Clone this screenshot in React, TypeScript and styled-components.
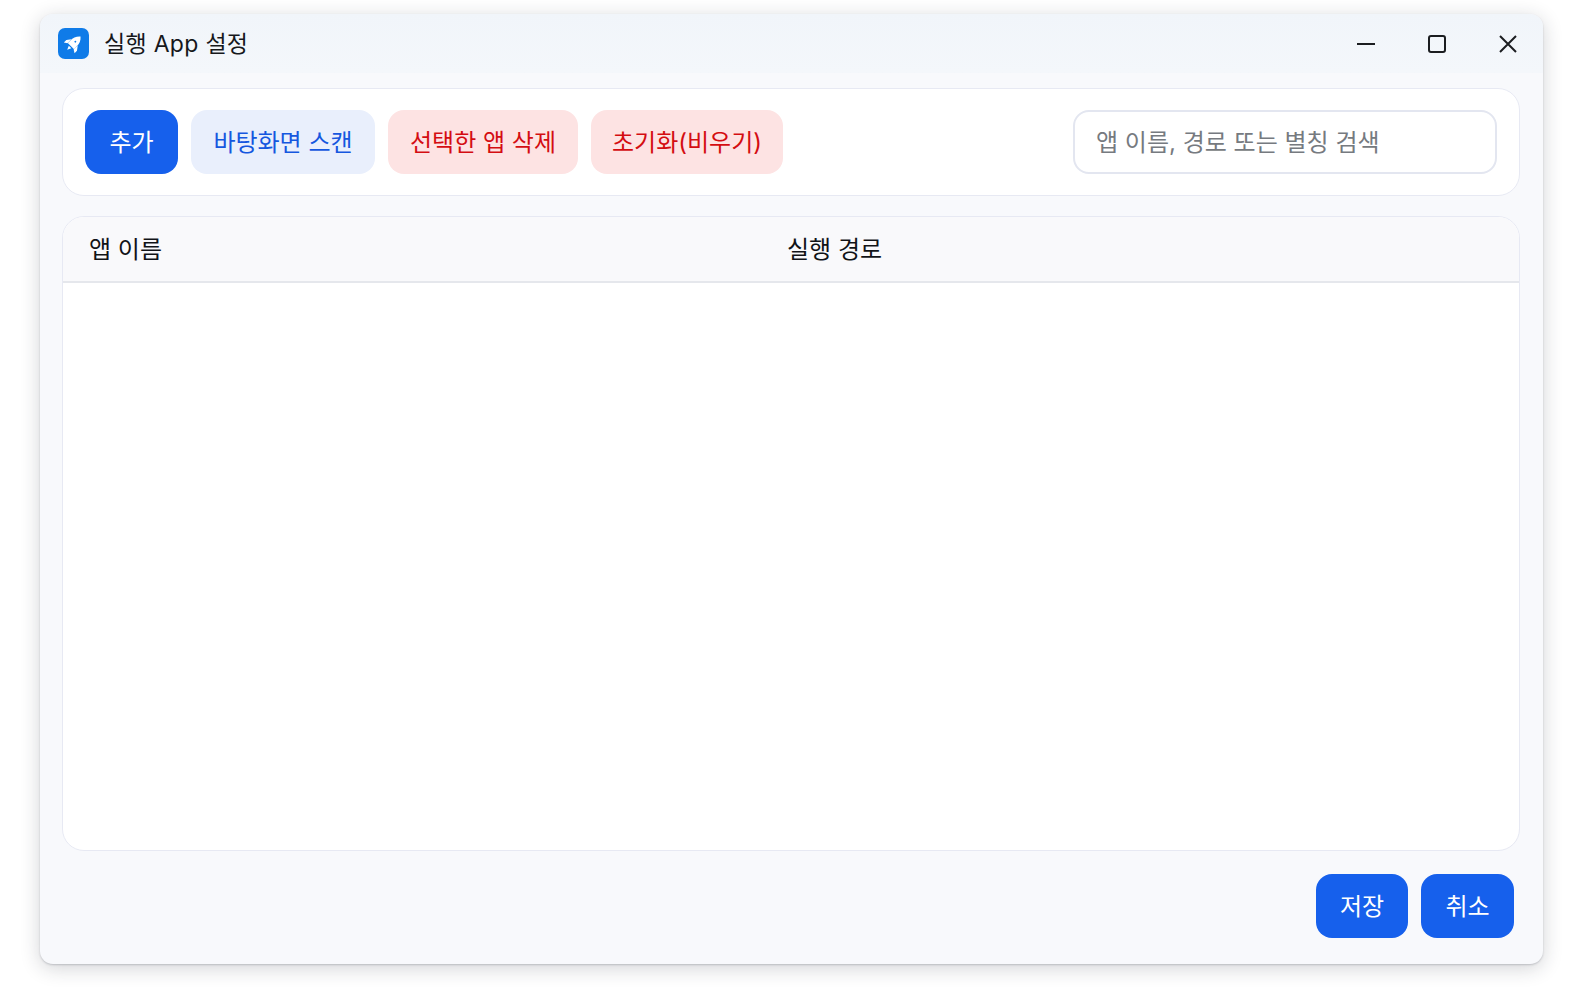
import React from "react";
import styled, { createGlobalStyle } from "styled-components";

const Global = createGlobalStyle`
  html, body { margin: 0; padding: 0; background: #ffffff; height: 100%; overflow: hidden; }
  body { font-family: "Inter", "Noto Sans CJK KR", sans-serif; }
  * { box-sizing: border-box; }
`;

const Page = styled.div`
  width: 1586px;
  height: 992px;
  padding: 14px 43px 28px 40px;
  background: #fff;
`;

const Win = styled.div`
  height: 100%;
  display: flex;
  flex-direction: column;
  border-radius: 13px;
  background: #f8f9fc;
  box-shadow: 0 4px 20px rgba(30, 35, 50, 0.2), 0 1px 2px rgba(30, 35, 50, 0.2);
  overflow: hidden;
`;

const TitleBar = styled.header`
  height: 59px;
  flex: none;
  display: flex;
  align-items: center;
  padding-left: 18px;
  background: linear-gradient(#f1f5fa, #f4f7fb);
`;

const AppIcon = styled.span`
  width: 31px;
  height: 31px;
  flex: none;
  display: flex;
  align-items: center;
  justify-content: center;
  border-radius: 7px;
  background: #0f7be8;
`;

const Title = styled.h1`
  margin: 0 0 0 15px;
  font-size: 23px;
  font-weight: 400;
  line-height: 30px;
  letter-spacing: 0.3px;
  color: #16181c;
`;

const WinControls = styled.div`
  margin-left: auto;
  display: flex;
`;

const WinBtn = styled.button`
  width: 71px;
  height: 59px;
  padding: 0;
  border: 0;
  background: transparent;
  display: flex;
  align-items: center;
  justify-content: center;
`;

const Body = styled.main`
  flex: 1;
  min-height: 0;
  display: flex;
  flex-direction: column;
  padding: 15px 23px 26px 22px;
`;

const Toolbar = styled.section`
  height: 108px;
  flex: none;
  display: flex;
  align-items: center;
  gap: 13px;
  padding: 0 22px;
  background: #fff;
  border: 1.5px solid #e7e9f3;
  border-radius: 22px;
`;

const variants = {
  primary: { bg: "#1660ec", fg: "#ffffff" },
  soft: { bg: "#e9effc", fg: "#1557df" },
  danger: { bg: "#fde3e3", fg: "#d40d12" },
};

const ActionButton = styled.button<{ $variant: keyof typeof variants; $w: number }>`
  width: ${(p) => p.$w}px;
  height: 64px;
  flex: none;
  padding: 0 0 4px;
  border: 0;
  border-radius: 16px;
  font-family: inherit;
  font-size: 24px;
  font-weight: 400;
  white-space: nowrap;
  background: ${(p) => variants[p.$variant].bg};
  color: ${(p) => variants[p.$variant].fg};
`;

const Search = styled.input`
  width: 424px;
  height: 64px;
  margin-left: auto;
  padding: 0 21px;
  background: #fff;
  border: 2px solid #e3e6f0;
  border-radius: 16px;
  font-family: inherit;
  font-size: 24px;
  outline: none;
  &::placeholder { color: #767a80; opacity: 1; }
`;

const TableCard = styled.section`
  flex: 1;
  min-height: 0;
  margin-top: 20px;
  background: #fff;
  border: 1.5px solid #e7e9f3;
  border-radius: 22px;
  overflow: hidden;
`;

const TableHead = styled.div`
  height: 66px;
  display: grid;
  grid-template-columns: 698px 1fr;
  align-items: center;
  padding: 0 0 3px 26px;
  background: #f9f9fb;
  border-bottom: 2px solid #e5e7ec;
`;

const HeadCell = styled.div`
  font-size: 24px;
  font-weight: 400;
  color: #111317;
`;

const Footer = styled.footer`
  flex: none;
  margin-top: 23px;
  padding-right: 6px;
  display: flex;
  justify-content: flex-end;
  gap: 13px;
`;

export default function App() {
  return (
    <>
      <Global />
      <Page>
        <Win>
          <TitleBar>
            <AppIcon>
              <svg width="21" height="21" viewBox="0 0 20 20">
                <g transform="rotate(45 10 10)">
                  <path fill="#fff" d="M10 .5C13 3 14.200 6.500 14.200 10v3.500H5.800V10C5.800 6.500 7 3 10 .5z" />
                  <path fill="#fff" d="M5.800 8.500 2.800 12.500v3.300l3-1.800zM14.200 8.500l3 4v3.300l-3-1.800z" />
                  <path fill="#fff" d="M8.300 14.600h3.400L10 18.500z" />
                  <circle cx="10" cy="7.500" r="0.900" fill="#0f7be8" />
                </g>
              </svg>
            </AppIcon>
            <Title>실행 App 설정</Title>
            <WinControls>
              <WinBtn aria-label="최소화">
                <svg width="20" height="20" viewBox="0 0 20 20" fill="none" stroke="#1b1d20" strokeWidth="2">
                  <path d="M1 10h18" />
                </svg>
              </WinBtn>
              <WinBtn aria-label="최대화">
                <svg width="20" height="20" viewBox="0 0 20 20" fill="none" stroke="#1b1d20" strokeWidth="2">
                  <rect x="2" y="2" width="16" height="16" rx="2" />
                </svg>
              </WinBtn>
              <WinBtn aria-label="닫기">
                <svg width="20" height="20" viewBox="0 0 20 20" fill="none" stroke="#1b1d20" strokeWidth="2">
                  <path d="M2 2l16 16M18 2L2 18" />
                </svg>
              </WinBtn>
            </WinControls>
          </TitleBar>
          <Body>
            <Toolbar>
              <ActionButton $variant="primary" $w={93}>추가</ActionButton>
              <ActionButton $variant="soft" $w={184}>바탕화면 스캔</ActionButton>
              <ActionButton $variant="danger" $w={190}>선택한 앱 삭제</ActionButton>
              <ActionButton $variant="danger" $w={192}>초기화(비우기)</ActionButton>
              <Search placeholder="앱 이름, 경로 또는 별칭 검색" />
            </Toolbar>
            <TableCard>
              <TableHead>
                <HeadCell>앱 이름</HeadCell>
                <HeadCell>실행 경로</HeadCell>
              </TableHead>
            </TableCard>
            <Footer>
              <ActionButton $variant="primary" $w={92}>저장</ActionButton>
              <ActionButton $variant="primary" $w={93}>취소</ActionButton>
            </Footer>
          </Body>
        </Win>
      </Page>
    </>
  );
}
